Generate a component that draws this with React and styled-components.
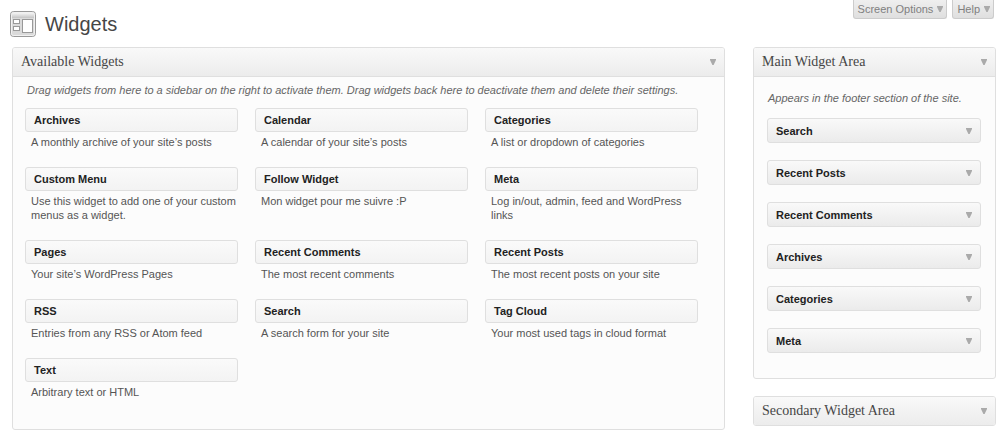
import React from "react";
import styled, { createGlobalStyle } from "styled-components";

const GlobalStyle = createGlobalStyle`
  *, *::before, *::after { box-sizing: border-box; }
  body {
    margin: 0;
    background: #fff;
    color: #555;
    font: 11px/14px "Liberation Sans", Arial, sans-serif;
  }
  h1, h2, h3, p, ul { margin: 0; padding: 0; }
  ul { list-style: none; }
  button { font: inherit; color: inherit; cursor: pointer; }
`;

const Page = styled.div`
  padding: 0 4px 4px 12px;
`;

const TopBar = styled.header`
  display: flex;
  justify-content: space-between;
  align-items: flex-start;
  height: 47px;
`;

const Heading = styled.div`
  display: flex;
  align-items: center;
  gap: 9px;
  margin-left: -2px;
  padding-top: 11px;
`;

const Title = styled.h1`
  font-size: 20px;
  line-height: 26px;
  font-weight: 400;
  color: #464646;
`;

const ScreenLinks = styled.nav`
  display: flex;
  gap: 5px;
  padding-right: 2px;
`;

const ScreenTab = styled.button`
  display: flex;
  align-items: center;
  gap: 4px;
  height: 19px;
  padding: 0 3px 1px 4px;
  border: 1px solid #ccc;
  border-top: 0;
  border-radius: 0 0 3px 3px;
  background: linear-gradient(#efefef, #dfdfdf);
  line-height: 16px;
  color: #808080;
`;

const Columns = styled.div`
  display: flex;
  align-items: flex-start;
  gap: 28px;
`;

const Main = styled.main`
  flex: 1;
  min-width: 0;
`;

const Sidebar = styled.aside`
  flex: 0 0 243px;
  display: flex;
  flex-direction: column;
  gap: 17px;
`;

const PanelBox = styled.section`
  border: 1px solid #dfdfdf;
  border-radius: 3px;
  background: #fcfcfc;
  overflow: hidden;
`;

const PanelTitle = styled.h2`
  font: 400 14px/28px "Liberation Serif", "Times New Roman", serif;
`;

const PanelToggle = styled.button`
  display: flex;
  justify-content: space-between;
  align-items: center;
  width: 100%;
  height: ${(p) => (p.$open ? 29 : 28)}px;
  padding: 0 8px;
  border: 0;
  border-bottom: ${(p) => (p.$open ? "1px solid #dfdfdf" : "0")};
  background: linear-gradient(#f9f9f9, #ececec);
  color: #464646;
  text-align: left;
`;

const Note = styled.p`
  font-style: italic;
  color: #666;
`;

const AvailableBody = styled.div`
  padding: 6px 26px 30px 12px;

  ${Note} {
    padding-left: 2px;
    margin-bottom: 11px;
  }
`;

const WidgetGrid = styled.ul`
  display: grid;
  grid-template-columns: repeat(3, 1fr);
  gap: 18px 17px;
`;

const WidgetTitle = styled.h3`
  height: 24px;
  padding: 0 8px;
  border: 1px solid #dfdfdf;
  border-radius: 3px;
  background: linear-gradient(#fafafa, #f3f3f3);
  font-size: 11px;
  line-height: 22px;
  font-weight: 700;
  color: #222;
`;

const WidgetText = styled.p`
  padding: 3px 0 0 6px;
`;

const AreaBody = styled.div`
  padding: 14px 14px 25px 13px;

  ${Note} {
    padding-left: 1px;
    margin-bottom: 13px;
  }
`;

const AreaList = styled.ul`
  display: flex;
  flex-direction: column;
  gap: 17px;
`;

const AreaItem = styled.button`
  display: flex;
  justify-content: space-between;
  align-items: center;
  width: 100%;
  height: 25px;
  padding: 0 8px;
  border: 1px solid #dfdfdf;
  border-radius: 3px;
  background: linear-gradient(#f9f9f9, #ebebeb);
  font-weight: 700;
  color: #222;
  text-align: left;
`;

const ArrowShape = styled.svg`
  flex: none;
  display: block;
  width: 6px;
  height: 6px;
  fill: #aaa;
`;

const Arrow = () => (
  <ArrowShape viewBox="0 0 6 6" aria-hidden="true">
    <path d="M0 0H6V1L3.6 6H2.4L0 1Z" />
  </ArrowShape>
);

const WidgetsIcon = () => (
  <svg width="26" height="26" viewBox="0 0 26 26" aria-hidden="true">
    <defs>
      <linearGradient id="bar" x1="0" y1="0" x2="0" y2="1">
        <stop offset="0" stopColor="#f4f4f4" />
        <stop offset="1" stopColor="#c4c4c4" />
      </linearGradient>
    </defs>
    <rect x="0.5" y="0.5" width="25" height="25" rx="3" fill="#dadada" stroke="#999" />
    <rect x="1.5" y="1.5" width="23" height="23" rx="2" fill="none" stroke="#f1f1f1" />
    <rect x="2" y="2" width="22" height="5" fill="url(#bar)" />
    <rect x="3.5" y="8.5" width="6" height="4" fill="#fff" stroke="#999" />
    <rect x="3.5" y="15.5" width="6" height="4" fill="#fff" stroke="#999" />
    <rect x="12.5" y="8.5" width="10" height="13" fill="#fff" stroke="#999" />
  </svg>
);

const available = [
  ["Archives", "A monthly archive of your site’s posts"],
  ["Calendar", "A calendar of your site’s posts"],
  ["Categories", "A list or dropdown of categories"],
  ["Custom Menu", "Use this widget to add one of your custom menus as a widget."],
  ["Follow Widget", "Mon widget pour me suivre :P"],
  ["Meta", "Log in/out, admin, feed and WordPress links"],
  ["Pages", "Your site’s WordPress Pages"],
  ["Recent Comments", "The most recent comments"],
  ["Recent Posts", "The most recent posts on your site"],
  ["RSS", "Entries from any RSS or Atom feed"],
  ["Search", "A search form for your site"],
  ["Tag Cloud", "Your most used tags in cloud format"],
  ["Text", "Arbitrary text or HTML"],
];

const mainArea = ["Search", "Recent Posts", "Recent Comments", "Archives", "Categories", "Meta"];

const Panel = ({ title, children }) => (
  <PanelBox>
    <PanelTitle>
      <PanelToggle type="button" $open={Boolean(children)} aria-expanded={Boolean(children)}>
        {title}
        <Arrow />
      </PanelToggle>
    </PanelTitle>
    {children}
  </PanelBox>
);

export default function App() {
  return (
    <Page>
      <GlobalStyle />
      <TopBar>
        <Heading>
          <WidgetsIcon />
          <Title>Widgets</Title>
        </Heading>
        <ScreenLinks>
          <ScreenTab type="button">
            Screen Options
            <Arrow />
          </ScreenTab>
          <ScreenTab type="button">
            Help
            <Arrow />
          </ScreenTab>
        </ScreenLinks>
      </TopBar>
      <Columns>
        <Main>
          <Panel title="Available Widgets">
            <AvailableBody>
              <Note>
                Drag widgets from here to a sidebar on the right to activate them. Drag widgets back
                here to deactivate them and delete their settings.
              </Note>
              <WidgetGrid>
                {available.map(([name, text]) => (
                  <li key={name}>
                    <WidgetTitle>{name}</WidgetTitle>
                    <WidgetText>{text}</WidgetText>
                  </li>
                ))}
              </WidgetGrid>
            </AvailableBody>
          </Panel>
        </Main>
        <Sidebar>
          <Panel title="Main Widget Area">
            <AreaBody>
              <Note>Appears in the footer section of the site.</Note>
              <AreaList>
                {mainArea.map((name) => (
                  <li key={name}>
                    <AreaItem type="button">
                      {name}
                      <Arrow />
                    </AreaItem>
                  </li>
                ))}
              </AreaList>
            </AreaBody>
          </Panel>
          <Panel title="Secondary Widget Area" />
        </Sidebar>
      </Columns>
    </Page>
  );
}
